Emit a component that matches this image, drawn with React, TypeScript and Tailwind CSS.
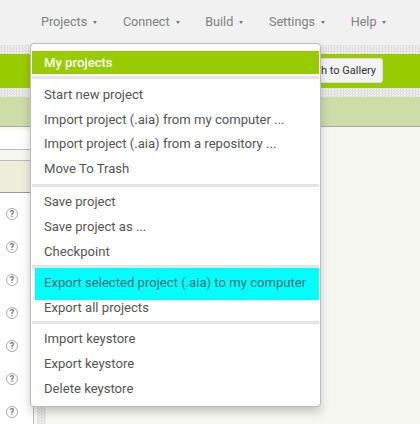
const groups: string[][] = [
  ["Start new project", "Import project (.aia) from my computer ...", "Import project (.aia) from a repository ...", "Move To Trash"],
  ["Save project", "Save project as ...", "Checkpoint"],
];

const dotted = "h-[9px] bg-[repeating-conic-gradient(#dedede_0_25%,#f0f0f0_0_50%)] bg-[length:3px_3px]";

function Nav({ label }: { label: string }) {
  return (
    <div className="flex items-center gap-[6px] text-[12.6px] leading-[18px] text-[#808080]">
      <span>{label}</span>
      <span className="w-0 h-0 border-x-[2.5px] border-x-transparent border-t-[3px] border-t-[#777]" />
    </div>
  );
}

function Q() {
  return (
    <div className="w-[12px] h-[12px] rounded-full border border-[#aaa] text-[9px] font-bold leading-[10px] text-center text-[#777] bg-white">?</div>
  );
}

function Item({ label }: { label: string }) {
  return <div className="h-[25px] leading-[25px] pl-[12px]">{label}</div>;
}

function Divider() {
  return <div className="h-[3px] bg-[#e5e5e5]" />;
}

export default function App() {
  return (
    <div className="relative w-[420px] h-[424px] overflow-hidden bg-[#f7f7f2] font-['Roboto',sans-serif]">
      <div className="h-[45px] bg-[#f1f1f1] flex pl-[41px] pt-[13px] gap-[25.7px] items-start">
        <Nav label="Projects" />
        <Nav label="Connect" />
        <Nav label="Build" />
        <Nav label="Settings" />
        <Nav label="Help" />
      </div>
      <div className={dotted} />
      <div className="h-[34px] bg-[#99cc00] flex justify-end items-start pt-[4px] pr-[37px]">
        <div className="h-[25px] px-[6px] bg-[#f4f4f4] rounded-[3px] border border-[#ddd] text-[11px] leading-[23px] text-[#333]">Switch to Gallery</div>
      </div>
      <div className={dotted} />
      <div className="h-[30px] bg-[#cedca8] border-b border-[#aaa]" />
      <div className="flex h-[297px]">
        <div className="w-[34px] border-r border-[#bbb] flex flex-col">
          <div className="h-[3px]" />
          <div className="h-[20px] bg-white border-b border-[#bbb]" />
          <div className="h-[11px] border-b border-[#bbb]" />
          <div className="h-[32px] bg-[#eeeedd] border-b border-[#999]" />
          <div className="flex-1 bg-white flex flex-col gap-[21px] pl-[6px] pt-[15px]">
            <Q /><Q /><Q /><Q /><Q /><Q /><Q />
          </div>
        </div>
        <div className={"ml-[3px] w-[9px] h-full " + dotted} />
      </div>
      <div className="absolute left-[30px] top-[43px] w-[291px] h-[364px] bg-white rounded-[4px] border border-[#bbb] shadow-[0_5px_10px_rgba(0,0,0,0.2)] px-[1px] pt-[7px] text-[13.1px] text-[#555]">
        <div className="h-[23px] bg-[#99cc00] text-white font-medium leading-[23px] pl-[12px]">My projects</div>
        <div className="h-[3px] bg-[#e5e5e5] mt-[2px] mb-[3px]" />
        <Item label={groups[0][0]} />
        <Item label={groups[0][1]} />
        <div className="-mt-[1px]"><Item label={groups[0][2]} /></div>
        <Item label={groups[0][3]} />
        <div className="mt-[3px] mb-[2px]"><Divider /></div>
        {groups[1].map((t) => <Item key={t} label={t} />)}
        <div className="mt-[1px]"><Divider /></div>
        <div className="ml-[3px] h-[32px] bg-[#00ffff] leading-[30px] pl-[9px] text-[#2f6f77]">Export selected project (.aia) to my computer</div>
        <div className="-mt-[5px]"><Item label="Export all projects" /></div>
        <div className="mt-[1px]"><Divider /></div>
        <div className="mt-[2px]">
          <Item label="Import keystore" />
          <Item label="Export keystore" />
          <Item label="Delete keystore" />
        </div>
      </div>
    </div>
  );
}
